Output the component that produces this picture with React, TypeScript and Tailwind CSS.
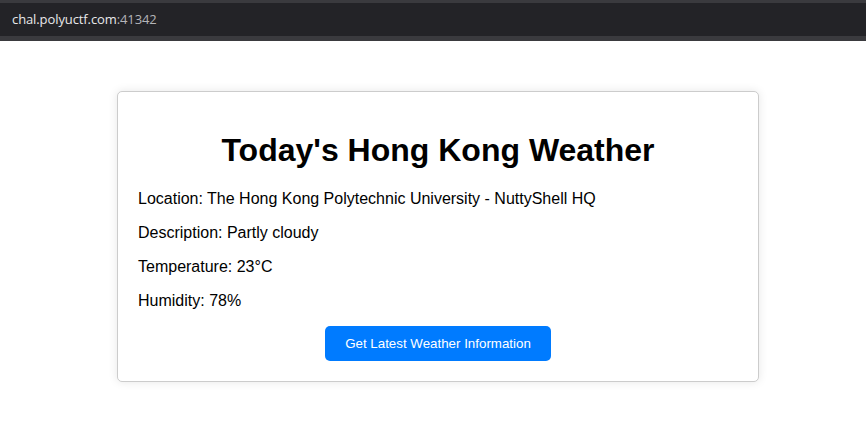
export default function App() {
  return (
    <div className="min-h-screen bg-white font-['Liberation_Sans',Arial,sans-serif]">
      {/* browser url strip */}
      <div className="h-[41px] bg-[#3a3a3e] pt-[3px] pb-[5px]">
        <div className="h-full bg-[#232327] flex items-center pl-3 font-['Open_Sans','Noto_Sans',sans-serif] text-[13px] tracking-[-0.1px]">
          <span className="text-[#e8e8ea]">chal.polyuctf.com</span>
          <span className="text-[#b4b4b8]">:41342</span>
        </div>
      </div>

      <div className="pl-[10px]">
        <div className="mx-auto mt-[50px] w-[642px] rounded-[5px] border border-[#ccc] bg-white px-5 pt-[19px] pb-5 shadow-[0_0_10px_rgba(0,0,0,0.1)] text-black">
          <h1 className="my-[21px] text-center text-[32px] font-bold leading-[37px]">Today's Hong Kong Weather</h1>
          <p className="mb-4 text-base leading-[18px]">Location: The Hong Kong Polytechnic University - NuttyShell HQ</p>
          <p className="mb-4 text-base leading-[18px]">Description: Partly cloudy</p>
          <p className="mb-4 text-base leading-[18px]">Temperature: 23°C</p>
          <p className="mb-4 text-base leading-[18px]">Humidity: 78%</p>
          <div className="flex justify-center">
            <button className="h-[35px] rounded-[5px] bg-[#007bff] px-5 text-[13.33px] text-white">
              Get Latest Weather Information
            </button>
          </div>
        </div>
      </div>
    </div>
  );
}
